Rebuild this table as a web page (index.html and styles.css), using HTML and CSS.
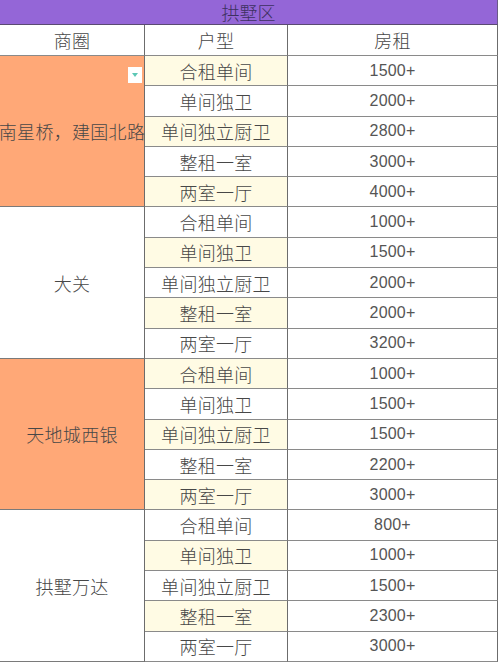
FILE: index.html
```html
<!DOCTYPE html>
<html lang="zh">
<head>
<meta charset="utf-8">
<title>拱墅区房租</title>
<link rel="stylesheet" href="styles.css">
</head>
<body>
<div class="sheet">
  <div class="title">拱墅区</div>
  <div class="cell head">商圈</div>
  <div class="cell head">户型</div>
  <div class="cell head">房租</div>

  <div class="cell area orange"><span class="nowrap">南星桥，建国北路</span><span class="dropdown"><svg width="6" height="4" viewBox="0 0 6 4"><path d="M0 0 L6 0 L3 4 Z" fill="#5cc7b5"/></svg></span></div>
  <div class="cell type cream">合租单间</div><div class="cell price">1500+</div>
  <div class="cell type">单间独卫</div><div class="cell price">2000+</div>
  <div class="cell type cream">单间独立厨卫</div><div class="cell price">2800+</div>
  <div class="cell type">整租一室</div><div class="cell price">3000+</div>
  <div class="cell type cream">两室一厅</div><div class="cell price">4000+</div>

  <div class="cell area">大关</div>
  <div class="cell type">合租单间</div><div class="cell price">1000+</div>
  <div class="cell type cream">单间独卫</div><div class="cell price">1500+</div>
  <div class="cell type">单间独立厨卫</div><div class="cell price">2000+</div>
  <div class="cell type cream">整租一室</div><div class="cell price">2000+</div>
  <div class="cell type">两室一厅</div><div class="cell price">3200+</div>

  <div class="cell area orange">天地城西银</div>
  <div class="cell type cream">合租单间</div><div class="cell price">1000+</div>
  <div class="cell type">单间独卫</div><div class="cell price">1500+</div>
  <div class="cell type cream">单间独立厨卫</div><div class="cell price">1500+</div>
  <div class="cell type">整租一室</div><div class="cell price">2200+</div>
  <div class="cell type cream">两室一厅</div><div class="cell price">3000+</div>

  <div class="cell area">拱墅万达</div>
  <div class="cell type">合租单间</div><div class="cell price">800+</div>
  <div class="cell type cream">单间独卫</div><div class="cell price">1000+</div>
  <div class="cell type">单间独立厨卫</div><div class="cell price">1500+</div>
  <div class="cell type cream">整租一室</div><div class="cell price">2300+</div>
  <div class="cell type">两室一厅</div><div class="cell price">3000+</div>
</div>
</body>
</html>
```
FILE: styles.css
```css
html, body {
  margin: 0;
  padding: 0;
  background: #ffffff;
}
body {
  font-family: "Liberation Sans", "Noto Sans CJK SC", sans-serif;
  color: #474747;
  overflow: hidden;
}
.sheet {
  display: grid;
  grid-template-columns: 145px 143px 210px;
  grid-template-rows: 25px 31px repeat(20, 30.3px);
  width: 498px;
}
.title {
  grid-column: 1 / span 3;
  background: #9466d7;
  color: #3d3060;
  font-size: 18px;
  font-family: "Noto Sans CJK SC", sans-serif;
  font-weight: 300;
  display: flex;
  align-items: center;
  justify-content: center;
  border-bottom: 1px solid #5a4a72;
  border-right: 1px solid #6a5a86;
  box-sizing: border-box;
}
.cell {
  box-sizing: border-box;
  border-right: 1px solid #6c6c6c;
  border-bottom: 1px solid #8a8a8a;
  display: flex;
  align-items: center;
  justify-content: center;
  white-space: nowrap;
  font-size: 18px;
  font-family: "Noto Sans CJK SC", sans-serif;
  font-weight: 300;
  letter-spacing: 0.3px;
  color: #474747;
}
.head {
  font-size: 18px;
}
.area {
  grid-row: span 5;
  position: relative;
  overflow: visible;
  border-bottom-color: #7a7a7a;
}
.orange {
  background: #ffa877;
}
.cream {
  background: #fffbe4;
}
.price {
  font-family: "Liberation Sans", sans-serif;
  font-size: 16px;
  font-weight: normal;
  color: #555555;
  letter-spacing: 0.2px;
}
.nowrap {
  white-space: nowrap;
}
.dropdown {
  position: absolute;
  top: 11px;
  right: 2px;
  width: 14px;
  height: 16px;
  background: #ffffff;
  display: flex;
  align-items: center;
  justify-content: center;
}
```
